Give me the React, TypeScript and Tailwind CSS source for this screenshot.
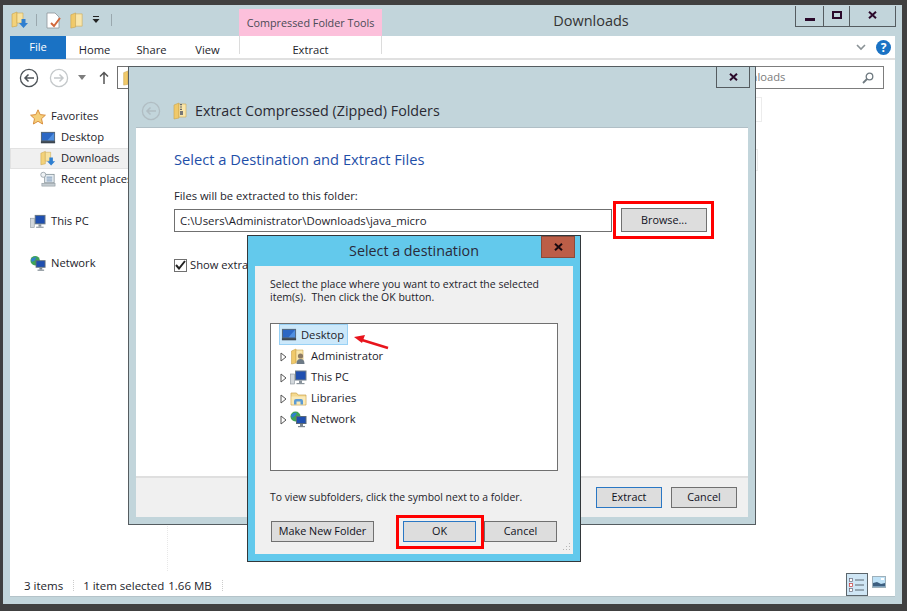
import React from "react";

const font = { fontFamily: '"Open Sans", "Noto Sans", sans-serif' };

function FolderDown({ s = 18 }: { s?: number }) {
  return (
    <svg width={s} height={s} viewBox="0 0 18 18">
      <path d="M1 3 L6 1 L6 15 L1 16 Z" fill="#f3d27a" stroke="#c9a24a" strokeWidth="0.6" />
      <path d="M6 2 H12 V12 H6 Z" fill="#f7e2a0" stroke="#cda850" strokeWidth="0.6" />
      <path d="M10.5 8 H14.5 V12 H17 L12.5 17 L8 12 H10.5 Z" fill="#2f7fd0" />
    </svg>
  );
}
function Folder({ s = 18, zip = false }: { s?: number; zip?: boolean }) {
  return (
    <svg width={s} height={s} viewBox="0 0 18 18">
      <path d="M3 3 L8 1 L8 16 L3 17 Z" fill="#f0c96a" stroke="#c9a24a" strokeWidth="0.6" />
      <path d="M8 2 H15 V15 H8 Z" fill="#f9e6ab" stroke="#cda850" strokeWidth="0.6" />
      {zip && <path d="M10 2 V14" stroke="#666" strokeWidth="2" strokeDasharray="1.2 1.2" />}
      {zip && <rect x="9" y="9" width="3" height="4" fill="#777" />}
    </svg>
  );
}
function UserFolder() {
  return (
    <svg width="17" height="17" viewBox="0 0 17 17">
      <path d="M1.5 3 L6 1 L6 15 L1.5 16 Z" fill="#f0c96a" stroke="#c9a24a" strokeWidth="0.6" />
      <path d="M6 2 H13 V14 H6 Z" fill="#f9e6ab" stroke="#cda850" strokeWidth="0.6" />
      <circle cx="10.5" cy="8" r="2.6" fill="#8c7a62" />
      <path d="M6.5 16 Q6.5 11 10.5 11 Q14.5 11 14.5 16 Z" fill="#6d7a86" />
    </svg>
  );
}
function Libraries() {
  return (
    <svg width="17" height="17" viewBox="0 0 17 17">
      <path d="M1 3 H6.5 L8 5 H16 V15 H1 Z" fill="#f4d98f" stroke="#c9a24a" strokeWidth="0.7" />
      <path d="M1.5 6.5 H15.5 V14.5 H1.5 Z" fill="#f9e9b8" />
      <path d="M4 14.5 V11 Q4 9 6 9 H11 Q13 9 13 11 V14.5 H10.5 V11.5 H6.5 V14.5 Z" fill="#5b9bd5" />
    </svg>
  );
}
function Monitor({ s = 17 }: { s?: number }) {
  return (
    <svg width={s} height={s} viewBox="0 0 17 17">
      <rect x="1" y="2" width="15" height="12" fill="#5a6a78" />
      <rect x="2" y="3" width="13" height="8" fill="#2c67c4" />
      <path d="M8 11 L15 3 V11 Z" fill="#4f8fe0" />
      <rect x="1" y="12" width="15" height="2" fill="#3c4650" />
    </svg>
  );
}
function PC({ s = 17 }: { s?: number }) {
  return (
    <svg width={s} height={s} viewBox="0 0 17 17">
      <rect x="0.5" y="5" width="4" height="10" fill="#d3d8dc" stroke="#87929a" strokeWidth="0.6" />
      <rect x="5" y="1.5" width="11.5" height="10" fill="#6f7d88" />
      <rect x="6" y="2.5" width="9.5" height="8" fill="#1f4fb0" />
      <rect x="9" y="11.5" width="3" height="2.5" fill="#8a949c" />
      <rect x="6.5" y="14" width="8" height="1.2" fill="#8a949c" />
    </svg>
  );
}
function Globe({ s = 17 }: { s?: number }) {
  return (
    <svg width={s} height={s} viewBox="0 0 17 17">
      <circle cx="5.5" cy="5.5" r="5" fill="#3fa356" />
      <path d="M1 4 Q4 1 7 2 L5 5 L2 7 Z" fill="#2f80d0" />
      <rect x="6" y="5" width="10.5" height="8" fill="#5a6a78" />
      <rect x="7" y="6" width="8.5" height="6" fill="#1f4fb0" />
      <rect x="10" y="13" width="3" height="2" fill="#7b868e" />
      <rect x="8" y="15" width="7" height="1.2" fill="#7b868e" />
    </svg>
  );
}
function Star() {
  return (
    <svg width="16" height="16" viewBox="0 0 16 16">
      <path d="M8 0.8 L10.2 5.6 L15.4 6.2 L11.5 9.7 L12.6 15 L8 12.3 L3.4 15 L4.5 9.7 L0.6 6.2 L5.8 5.6 Z" fill="#f5cf7a" stroke="#d98f3e" strokeWidth="1" />
    </svg>
  );
}
function Recent() {
  return (
    <svg width="17" height="17" viewBox="0 0 17 17">
      <rect x="5" y="3" width="10" height="9" fill="#e8eef2" stroke="#7d8a92" strokeWidth="0.8" />
      <path d="M7 6 H13 M7 8 H13 M7 10 H13" stroke="#5b7fa8" strokeWidth="0.8" />
      <circle cx="3.5" cy="3.5" r="2.7" fill="#eef1f3" stroke="#7d8a92" strokeWidth="0.7" />
      <rect x="2" y="12.5" width="14" height="3" fill="#c3cbd0" stroke="#8b959c" strokeWidth="0.6" />
    </svg>
  );
}
function Circle({ color, op = 1, dir }: { color: string; op?: number; dir: "l" | "r" }) {
  return (
    <svg width="20" height="20" viewBox="0 0 20 20" opacity={op}>
      <circle cx="10" cy="10" r="8.6" fill="none" stroke={color} strokeWidth="1.3" />
      {dir === "l" ? (
        <path d="M15 10 H6 M9.5 6.5 L6 10 L9.5 13.5" fill="none" stroke={color} strokeWidth="1.5" />
      ) : (
        <path d="M5 10 H14 M10.5 6.5 L14 10 L10.5 13.5" fill="none" stroke={color} strokeWidth="1.5" />
      )}
    </svg>
  );
}
function X({ c = "#2b0a2b" }: { c?: string }) {
  return (
    <svg width="9" height="8" viewBox="0 0 9 8">
      <path d="M1 0.8 L8 7.2 M8 0.8 L1 7.2" stroke={c} strokeWidth="2" />
    </svg>
  );
}
function Tri() {
  return (
    <svg width="7" height="10" viewBox="0 0 7 10" className="shrink-0">
      <path d="M1 1 L6 5 L1 9 Z" fill="#fff" stroke="#555" strokeWidth="1" />
    </svg>
  );
}

function SideItem({ icon, label, active, top }: { icon: React.ReactNode; label: string; active?: boolean; top?: boolean }) {
  return (
    <div className={`flex h-[21px] items-center gap-[5px] ${top ? "pl-[20px]" : active ? "pl-[29px]" : "pl-[30px]"} ${active ? "bg-[#f0f0f0] border border-[#e2e2e2]" : ""}`}>
      <span className="w-[16px] flex justify-center shrink-0">{icon}</span>
      <span className="whitespace-nowrap">{label}</span>
    </div>
  );
}

function Btn({ label, w, blue }: { label: string; w: string; blue?: boolean }) {
  return (
    <div className={`${w} h-[21px] flex items-center justify-center bg-[#dddddd] border text-[10.8px] text-[#111122] ${blue ? "border-[#2a77c4]" : "border-[#707070]"}`}>
      {label}
    </div>
  );
}

function TreeRow({ icon, label }: { icon: React.ReactNode; label: string }) {
  return (
    <div className="flex h-[21px] items-center pl-[9px] pt-[2px]">
      <Tri />
      <span className="w-[17px] ml-[3px] flex justify-center shrink-0">{icon}</span>
      <span className="ml-[4px]">{label}</span>
    </div>
  );
}

export default function App() {
  return (
    <div style={font} className="relative w-[907px] h-[611px] bg-[#404040] overflow-hidden text-[11.2px] text-[#1d1d2b]">
      {/* Explorer window */}
      <div className="absolute left-[3px] top-[5px] w-[899px] h-[599px] bg-[#c2d5db] flex flex-col px-[7px] pb-[7px]">
        {/* title bar */}
        <div className="h-[31px] flex items-start relative shrink-0">
          <div className="flex items-center h-[26px] mt-[2px] pl-[1px]">
            <FolderDown />
            <span className="w-px h-[12px] bg-[#9aa8ae] ml-[7px] mr-[9px]" />
            <svg width="15" height="17" viewBox="0 0 15 17">
              <path d="M1 1 H9 L13 5 V16 H1 Z" fill="#fff" stroke="#8d9499" strokeWidth="0.8" />
              <path d="M5 11 L8 14 L14 6" fill="none" stroke="#d1683b" strokeWidth="2" />
            </svg>
            <span className="ml-[7px]"><Folder s={17} /></span>
            <svg width="8" height="8" viewBox="0 0 8 8" className="ml-[7px]">
              <rect x="1" y="0" width="6" height="1" fill="#222" />
              <path d="M0.5 3 H7.5 L4 7 Z" fill="#222" />
            </svg>
            <span className="w-px h-[12px] bg-[#9aa8ae] ml-[11px]" />
          </div>
          <div className="absolute left-[229px] top-[4px] w-[143px] h-[27px] bg-[#fcc0db] flex items-center justify-center text-[10.8px] text-[#4a4a55] pt-[1px]">
            Compressed Folder Tools
          </div>
          <div className="absolute left-[516px] top-[5px] w-[130px] text-center text-[14.5px] text-[#333]">Downloads</div>
          <div className="absolute right-[-1px] top-[1px] w-[101px] h-[21px] flex border border-[#555c60] border-t-0">
            <div className="w-[28px] border-r border-[#555c60] flex items-end justify-center pb-[5px]">
              <span className="w-[10px] h-[3px] bg-[#2b0a2b]" />
            </div>
            <div className="w-[26px] border-r border-[#555c60] flex items-center justify-center pb-[3px]">
              <span className="w-[10px] h-[8px] border-2 border-[#2b0a2b]" />
            </div>
            <div className="flex-1 flex items-center justify-center pb-[3px]"><X /></div>
          </div>
        </div>

        {/* content */}
        <div className="flex-1 bg-white flex flex-col border-b border-[#b4c3c9] min-h-0">
          {/* ribbon tabs */}
          <div className="h-[24px] shrink-0 flex border-b-2 border-[#e0e0e0] relative">
            <div className="w-[56px] h-[23px] bg-[#1a72c4] text-white flex items-center justify-center">File</div>
            <div className="w-[57px] h-[23px] flex items-center justify-center pt-[5px]">Home</div>
            <div className="w-[57px] h-[23px] flex items-center justify-center pt-[5px]">Share</div>
            <div className="w-[55px] h-[23px] flex items-center justify-center pt-[5px]">View</div>
            <div className="ml-[4px] w-[143px] h-[18px] border-x border-[#dcdcdc] flex items-center justify-center pt-[10px]">Extract</div>
            <div className="absolute right-[4px] top-[4px] flex items-center gap-[10px]">
              <svg width="10" height="7" viewBox="0 0 10 7">
                <path d="M1 1 L5 5 L9 1" fill="none" stroke="#8a9296" strokeWidth="1.6" />
              </svg>
              <span className="w-[15px] h-[15px] rounded-full bg-[#1a72c4] text-white text-[12px] font-bold flex items-center justify-center">?</span>
            </div>
          </div>
          {/* nav row */}
          <div className="h-[35px] shrink-0 flex items-center relative">
            <span className="ml-[9px]"><Circle color="#4d5358" dir="l" /></span>
            <span className="ml-[10px]"><Circle color="#c4c8ca" dir="r" /></span>
            <svg width="8" height="5" viewBox="0 0 8 5" className="ml-[9px]"><path d="M0 0 H8 L4 5 Z" fill="#7d7d7d" /></svg>
            <svg width="10" height="13" viewBox="0 0 10 13" className="ml-[13px]">
              <path d="M5 13 V2 M1 5.5 L5 1.5 L9 5.5" fill="none" stroke="#555" strokeWidth="1.5" />
            </svg>
            <div className="ml-[8px] h-[23px] w-[30px] border border-[#707070] pl-[3px] flex items-center"><Folder s={16} /></div>
            <div className="absolute right-[11px] top-[6px] w-[170px] h-[23px] border border-[#7d7d7d] flex items-center justify-between pl-[12px] pr-[9px] text-[#7c7c7c]">
              <span>Downloads</span>
              <svg width="12" height="12" viewBox="0 0 12 12">
                <circle cx="7.5" cy="4.5" r="3.3" fill="none" stroke="#6f7a80" strokeWidth="1.3" />
                <path d="M5 7 L1 11" stroke="#6f7a80" strokeWidth="1.8" />
              </svg>
            </div>
          </div>
          {/* body */}
          <div className="flex-1 flex flex-col min-h-0">
            <div className="flex-1 w-[158px] border-r border-dotted border-[#e8e8e8] pt-[11px]">
              <SideItem top icon={<Star />} label="Favorites" />
              <SideItem icon={<Monitor s={16} />} label="Desktop" />
              <SideItem active icon={<FolderDown s={17} />} label="Downloads" />
              <SideItem icon={<Recent />} label="Recent places" />
              <div className="h-[21px]" />
              <SideItem top icon={<PC />} label="This PC" />
              <div className="h-[21px]" />
              <SideItem top icon={<Globe />} label="Network" />
            </div>
            {/* status bar */}
            <div className="h-[25px] shrink-0 flex items-center relative text-[11.5px]">
              <span className="ml-[14px] pt-[4px]">3 items</span>
              <span className="ml-[10px] mt-[4px] h-[11px] border-l border-dotted border-[#ccc]" />
              <span className="ml-[9px] pt-[4px]">1 item selected</span>
              <span className="ml-[4px] pt-[4px]">1.66 MB</span>
              <span className="ml-[10px] mt-[4px] h-[11px] border-l border-dotted border-[#ccc]" />
              <div className="absolute right-[8px] bottom-0 flex items-center gap-[4px]">
                <div className="w-[22px] h-[23px] bg-[#cfe6f5] border border-[#5c666c] flex items-center justify-center">
                  <svg width="16" height="14" viewBox="0 0 16 14">
                    <rect x="0.5" y="0.5" width="3" height="3" fill="#fff" stroke="#667" strokeWidth="0.7" />
                    <rect x="0.5" y="5.5" width="3" height="3" fill="#fff" stroke="#c33" strokeWidth="0.7" />
                    <rect x="0.5" y="10.5" width="3" height="3" fill="#fff" stroke="#667" strokeWidth="0.7" />
                    <path d="M6 2 H15 M6 7 H15 M6 12 H15" stroke="#5a6670" strokeWidth="1" />
                  </svg>
                </div>
                <svg width="14" height="12" viewBox="0 0 14 12" className="mb-[5px] mr-[1px]">
                  <rect x="0.5" y="0.5" width="13" height="11" fill="#bfe2f7" stroke="#9eb0ba" />
                  <path d="M1 10.5 V7 L5 6 L9 8 L13 7 V10.5 Z" fill="#3d5f80" />
                  <rect x="9" y="2" width="3" height="2" fill="#fff" />
                </svg>
              </div>
            </div>
          </div>
        </div>
      </div>

      {/* faint shapes peeking past the dialog */}
      <div className="absolute left-[756px] top-[97px] w-[6px] h-[25px] border border-l-0 border-[#ececec]" />
      <div className="absolute left-[756px] top-[149px] w-[2px] h-[22px] border border-l-0 border-[#ececec]" />

      {/* Extract dialog */}
      <div className="absolute left-[128px] top-[66px] w-[628px] h-[459px] bg-[#c2d5db] border border-[#555c60] flex flex-col px-[7px] pb-[7px]">
        <div className="absolute right-[5px] top-[-1px] w-[34px] h-[22px] border border-[#555c60] flex items-center justify-center"><X /></div>
        <div className="h-[60px] shrink-0 flex items-center pt-[28px] pl-[5px]">
          <span className="opacity-70"><Circle color="#aab4b9" dir="l" /></span>
          <span className="ml-[10px]"><Folder s={18} zip /></span>
          <span className="ml-[6px] text-[14.3px] text-[#2a2a33] -mt-[1px]">Extract Compressed (Zipped) Folders</span>
        </div>
        <div className="flex-1 bg-white border-t border-[#b0bfc6] pl-[38px] pt-[20px] min-h-0">
          <div className="text-[14.7px] leading-[22px] text-[#1f4fa8]">Select a Destination and Extract Files</div>
          <div className="mt-[17px] leading-[18px]">Files will be extracted to this folder:</div>
          <div className="mt-[4px] flex items-start">
            <div className="w-[438px] h-[23px] border border-[#707070] flex items-center pl-[5px] text-[11.4px]">C:\Users\Administrator\Downloads\java_micro</div>
          </div>
          <div className="mt-[25px] flex items-center gap-[3px]">
            <span className="w-[13px] h-[13px] border border-[#707070] flex items-center justify-center">
              <svg width="11" height="10" viewBox="0 0 11 10"><path d="M1 5 L4 8.5 L10 1" fill="none" stroke="#222" strokeWidth="2" /></svg>
            </span>
            <span>Show extracted files when complete</span>
          </div>
        </div>
        <div className="h-[41px] shrink-0 bg-[#f0f0f0] border-t-2 border-[#dfdfdf] flex items-center justify-end gap-[9px] pr-[11px]">
          <Btn label="Extract" w="w-[66px]" blue />
          <Btn label="Cancel" w="w-[66px]" />
        </div>
      </div>

      {/* Browse button + highlight */}
      <div className="absolute left-[621px] top-[208px]">
        <div className="w-[86px] h-[24px] bg-[#dddddd] border border-[#707070] flex items-center justify-center text-[10.8px] text-[#111122]">Browse...</div>
      </div>
      <div className="absolute left-[613px] top-[201px] w-[101px] h-[38px] border-[3px] border-[#ff0000]" />

      {/* Select a destination dialog */}
      <div className="absolute left-[247px] top-[235px] w-[334px] h-[327px] bg-[#63c9ec] border border-[#33383b] flex flex-col px-[7px] pb-[7px]">
        <div className="absolute right-[5px] top-0 w-[34px] h-[22px] bg-[#bc5e47] border border-[#8a4a3a] flex items-center justify-center"><X c="#1a0a10" /></div>
        <div className="h-[30px] shrink-0 flex items-center justify-center text-[14.3px] text-[#2a2a3a] pb-[1px]">Select a destination</div>
        <div className="flex-1 bg-[#f0f0f0] px-[15px] pt-[12px] min-h-0 relative">
          <div className="text-[10.5px] leading-[13px] whitespace-nowrap">Select the place where you want to extract the selected<br />item(s).&nbsp; Then click the OK button.</div>
          <div className="mt-[19px] h-[148px] w-[288px] bg-white border border-[#707070]">
            <div className="flex h-[21px] items-center">
              <div className="ml-[8px] h-[21px] w-[69px] flex items-center bg-[#cce8fa] border border-[#99d1f5] pl-[1px] pt-[1px]">
                <Monitor s={16} />
                <span className="ml-[4px]">Desktop</span>
              </div>
            </div>
            <TreeRow icon={<UserFolder />} label="Administrator" />
            <TreeRow icon={<PC />} label="This PC" />
            <TreeRow icon={<Libraries />} label="Libraries" />
            <TreeRow icon={<Globe />} label="Network" />
          </div>
          <div className="mt-[19px] text-[10.4px] leading-[14px] whitespace-nowrap">To view subfolders, click the symbol next to a folder.</div>
          <div className="mt-[17px] flex">
            <div className="ml-[1px]"><Btn label="Make New Folder" w="w-[103px]" /></div>
            <div className="ml-[29px]"><Btn label="OK" w="w-[73px]" blue /></div>
            <div className="ml-[8px]"><Btn label="Cancel" w="w-[73px]" /></div>
          </div>
          <svg width="10" height="10" viewBox="0 0 10 10" className="absolute right-[2px] bottom-[2px]">
            <path d="M8 1 H9 V2 H8 Z M5 4 H6 V5 H5 Z M8 4 H9 V5 H8 Z M2 7 H3 V8 H2 Z M5 7 H6 V8 H5 Z M8 7 H9 V8 H8 Z" fill="#b5b5b5" />
          </svg>
        </div>
      </div>

      {/* red annotations */}
      <div className="absolute left-[396px] top-[515px] w-[88px] h-[34px] border-[3px] border-[#ff0000]" />
      <svg className="absolute left-[350px] top-[332px]" width="42" height="22" viewBox="0 0 42 22">
        <path d="M38 16 L12 8" stroke="#e8141c" strokeWidth="2.5" />
        <path d="M4 5 L15 3 L12 11 Z" fill="#e8141c" />
      </svg>
    </div>
  );
}
